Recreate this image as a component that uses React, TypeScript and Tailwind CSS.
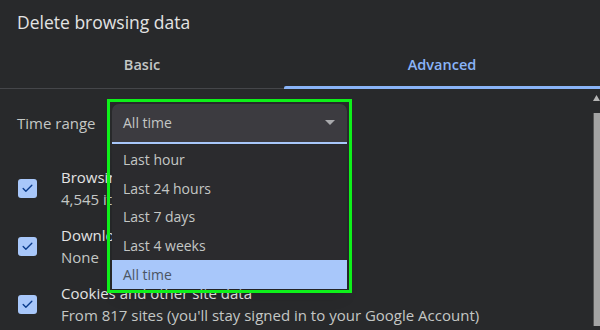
import { Check } from 'lucide-react';

const font = "'Open Sans', 'Noto Sans', sans-serif";

const ranges = ['Last hour', 'Last 24 hours', 'Last 7 days', 'Last 4 weeks', 'All time'];

const items = [
  { title: 'Browsing history', detail: '4,545 items' },
  { title: 'Download history', detail: 'None' },
  { title: 'Cookies and other site data', detail: "From 817 sites (you'll stay signed in to your Google Account)" },
];

function CheckBox() {
  return (
    <div className="size-[19px] shrink-0 rounded-[3px] bg-[#a8c7fa] flex items-center justify-center">
      <Check className="size-[13px] text-[#0a3b8c]" strokeWidth={2.5} />
    </div>
  );
}

export default function App() {
  return (
    <div
      className="relative w-[600px] h-[330px] overflow-hidden bg-[#28292b] text-[#e3e3e3]"
      style={{ fontFamily: font }}
    >
      {/* Header */}
      <div className="h-[45px] pl-[17px] pt-[9px] text-[17.5px] leading-[26px] text-[#e3e3e3]">Delete browsing data</div>

      {/* Tabs */}
      <div className="grid grid-cols-[284px_1fr] h-[44px] border-b border-[#45464a]">
        <div className="flex items-center justify-center pb-[4px] text-[14.5px] font-semibold text-[#c4c7c5]">Basic</div>
        <div className="relative flex items-center justify-center pb-[4px] text-[14.5px] font-semibold text-[#8ab4f8]">
          Advanced
          <div className="absolute left-0 right-0 -bottom-px h-[3px] rounded-tl-[2px] bg-[#8ab4f8]" />
        </div>
      </div>

      <div className="flex">
        <div className="flex-1 flex flex-col">
          {/* Time range */}
          <div className="flex items-center h-[56px] pt-[13px]">
            <div className="w-[112px] pl-[17px] text-[15px] text-[#c4c7c5]">Time range</div>
            <div className="w-[235px] h-[40px] rounded-t-[7px] bg-[#3c3b40] border-b-2 border-[#a8c7fa] flex items-center justify-between pl-[11px] pr-[12px] text-[14px] text-[#c4c7c5]">
              <span>All time</span>
              <svg width="10" height="5" viewBox="0 0 10 5"><path d="M0 0h10L5 5z" fill="#a9aaad" /></svg>
            </div>
          </div>

          {/* Data types */}
          <div className="flex flex-col gap-[13px] pt-[20px]">
            {items.map((item) => (
              <div key={item.title} className="flex items-center h-[45px]">
                <div className="w-[61px] pl-[18px] pt-[2px]">
                  <CheckBox />
                </div>
                <div className="flex flex-col leading-[22px]">
                  <span className="text-[15px] text-[#e3e3e3]">{item.title}</span>
                  <span className="text-[15px] text-[#c4c7c5]">{item.detail}</span>
                </div>
              </div>
            ))}
          </div>
        </div>

        {/* Scrollbar */}
        <div className="w-[7px] flex flex-col pt-[6px]">
          <svg width="7" height="6" viewBox="0 0 7 6"><path d="M0 6L3.5 0L7 6z" fill="#b5b5b5" /></svg>
          <div className="mt-[12px] flex-1 bg-[#a3a3a3] border-l border-[#555]" />
        </div>
      </div>

      {/* Open dropdown list */}
      <div className="absolute left-[112px] top-[145px] w-[235px] bg-[#2b2b2e] shadow-lg">
        {ranges.map((r) => (
          <div
            key={r}
            className={
              r === 'All time'
                ? 'h-[28.8px] flex items-center pl-[11px] text-[14px] bg-[#a8c7fa] text-[#4b5563]'
                : 'h-[28.8px] flex items-center pl-[11px] text-[14px] text-[#c4c7c5]'
            }
          >
            {r}
          </div>
        ))}
      </div>

      {/* Highlight frame */}
      <div className="absolute left-[107px] top-[99px] w-[245px] h-[194px] border-[3px] border-[#0ef01a] pointer-events-none" />
    </div>
  );
}
